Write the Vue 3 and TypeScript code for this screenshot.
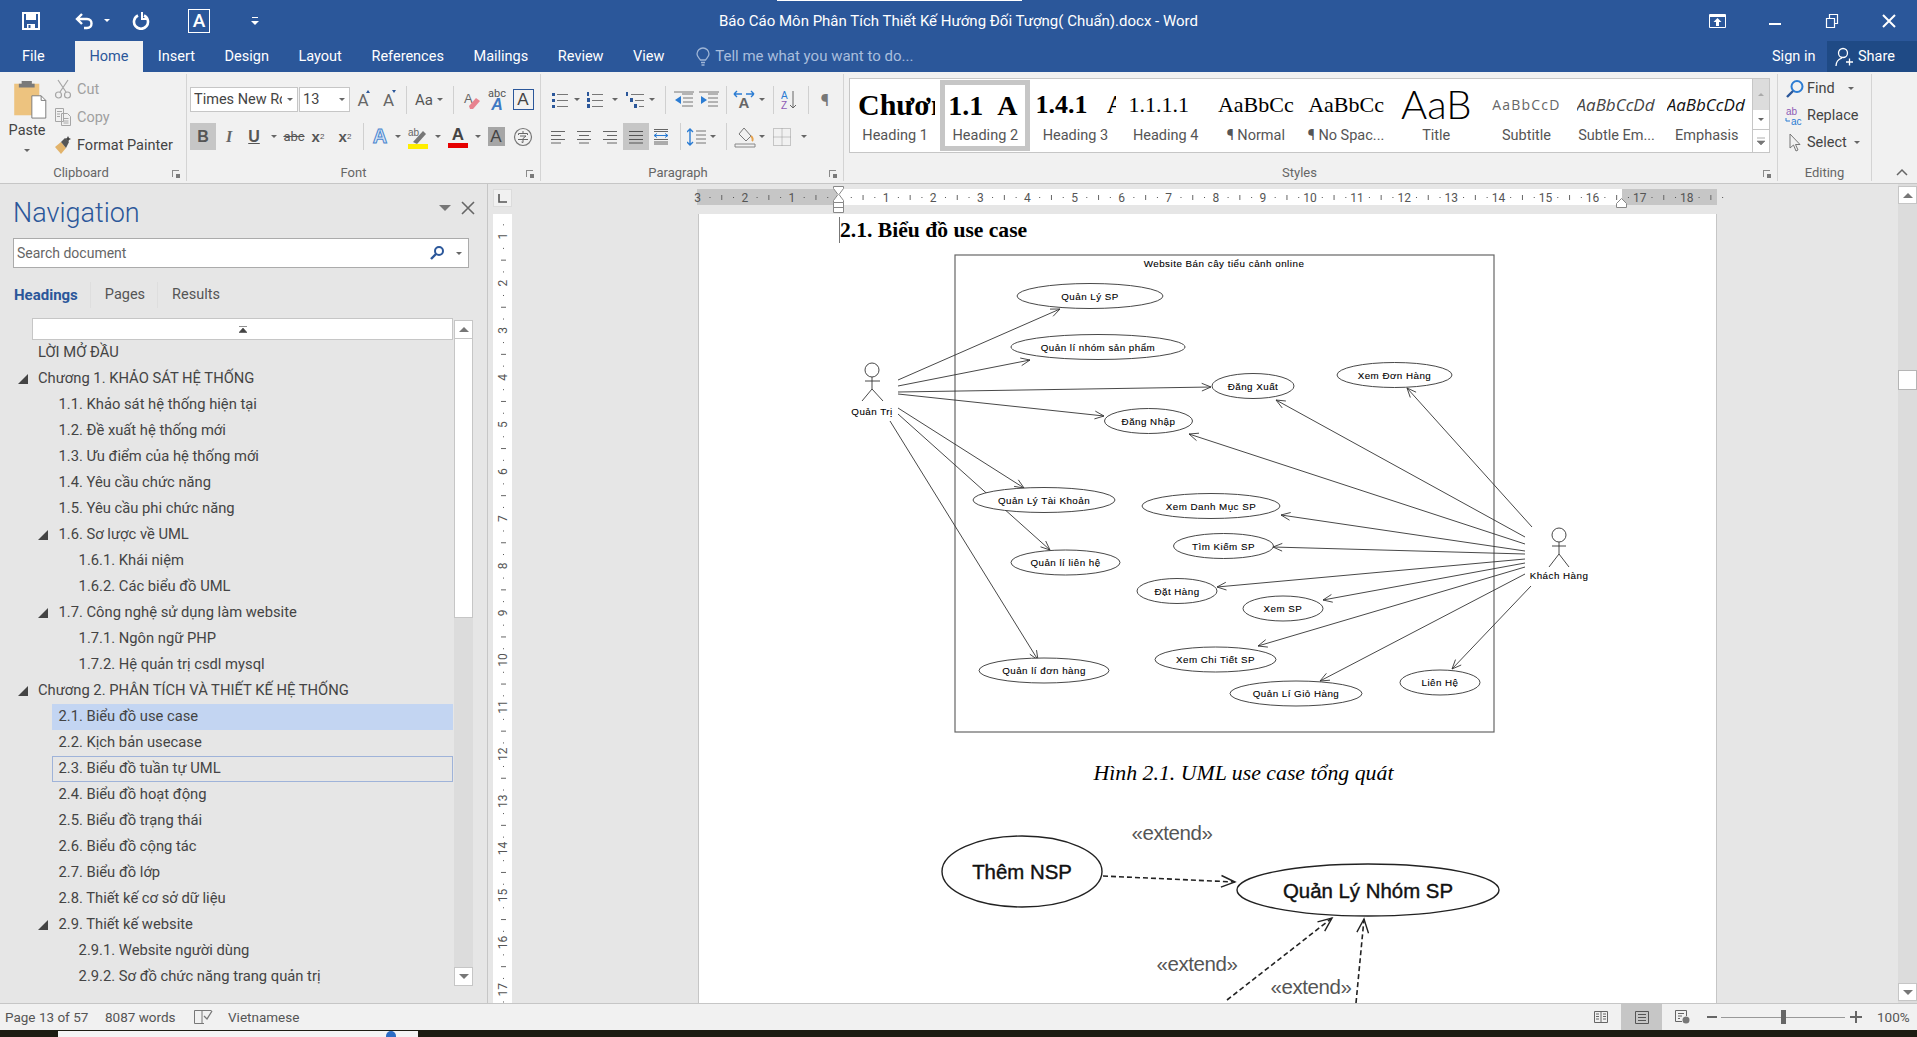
<script setup lang="ts">
interface NavRow { t: string; l: number; arrow?: boolean; sel?: boolean; hover?: boolean }

const tabs = ['Insert', 'Design', 'Layout', 'References', 'Mailings', 'Review', 'View']

const navRows: NavRow[] = [
  { t: 'LỜI MỞ ĐẦU', l: 1 },
  { t: 'Chương 1. KHẢO SÁT HỆ THỐNG', l: 1, arrow: true },
  { t: '1.1. Khảo sát hệ thống hiện tại', l: 2 },
  { t: '1.2. Đề xuất hệ thống mới', l: 2 },
  { t: '1.3. Ưu điểm của hệ thống mới', l: 2 },
  { t: '1.4. Yêu cầu chức năng', l: 2 },
  { t: '1.5. Yêu cầu phi chức năng', l: 2 },
  { t: '1.6. Sơ lược về UML', l: 2, arrow: true },
  { t: '1.6.1. Khái niệm', l: 3 },
  { t: '1.6.2. Các biểu đồ UML', l: 3 },
  { t: '1.7. Công nghệ sử dụng làm website', l: 2, arrow: true },
  { t: '1.7.1. Ngôn ngữ PHP', l: 3 },
  { t: '1.7.2. Hệ quản trị csdl mysql', l: 3 },
  { t: 'Chương 2. PHÂN TÍCH VÀ THIẾT KẾ HỆ THỐNG', l: 1, arrow: true },
  { t: '2.1. Biểu đồ use case', l: 2, sel: true },
  { t: '2.2. Kịch bản usecase', l: 2 },
  { t: '2.3. Biểu đồ tuần tự UML', l: 2, hover: true },
  { t: '2.4. Biểu đồ hoạt động', l: 2 },
  { t: '2.5. Biểu đồ trạng thái', l: 2 },
  { t: '2.6. Biểu đồ cộng tác', l: 2 },
  { t: '2.7. Biểu đồ lớp', l: 2 },
  { t: '2.8. Thiết kế cơ sở dữ liệu', l: 2 },
  { t: '2.9. Thiết kế website', l: 2, arrow: true },
  { t: '2.9.1. Website người dùng', l: 3 },
  { t: '2.9.2. Sơ đồ chức năng trang quản trị', l: 3 },
]

const styles = [
  { name: 'Heading 1', prev: 'Chương', cls: 'p-h1' },
  { name: 'Heading 2', prev: '1.1\u00a0\u00a0A', cls: 'p-h2', sel: true },
  { name: 'Heading 3', prev: '1.4.1\u00a0\u00a0\u00a0A', cls: 'p-h3' },
  { name: 'Heading 4', prev: '1.1.1.1', cls: 'p-h4' },
  { name: '¶ Normal', prev: 'AaBbCc', cls: 'p-n' },
  { name: '¶ No Spac...', prev: 'AaBbCc', cls: 'p-n' },
  { name: 'Title', prev: 'AaB', cls: 'p-title' },
  { name: 'Subtitle', prev: 'AaBbCcD', cls: 'p-sub' },
  { name: 'Subtle Em...', prev: 'AaBbCcDd', cls: 'p-se' },
  { name: 'Emphasis', prev: 'AaBbCcDd', cls: 'p-em' },
]

const CM = 47.1

// horizontal ruler: x = 0 is the left end of the grey part, number 0 sits at 142
const hTicks: { x: number; kind: string; n?: number }[] = []
for (let i = -12; i <= 75; i++) {
  const x = 142 + (i * CM) / 4
  if (i === 0) continue
  if (i % 4 === 0) hTicks.push({ x, kind: 'n', n: Math.abs(i / 4) })
  else if (i % 2 === 0) hTicks.push({ x, kind: 'long' })
  else hTicks.push({ x, kind: 'dot' })
}

const vTicks: { y: number; kind: string; n?: number }[] = []
for (let i = 1; i <= 70; i++) {
  const y = -25 + (i * CM) / 4
  if (i % 4 === 0) vTicks.push({ y, kind: 'n', n: i / 4 })
  else if (i % 2 === 0) vTicks.push({ y, kind: 'long' })
  else vTicks.push({ y, kind: 'dot' })
}

const useCases = [
  { t: 'Quản Lý SP', x: 1090, y: 296, rx: 73 },
  { t: 'Quản lí nhóm sản phẩm', x: 1098, y: 347, rx: 87 },
  { t: 'Đăng Nhập', x: 1148.5, y: 421, rx: 44 },
  { t: 'Quản Lý Tài Khoản', x: 1044, y: 500, rx: 71 },
  { t: 'Đăng Xuất', x: 1253, y: 386, rx: 41 },
  { t: 'Xem Đơn Hàng', x: 1394.5, y: 375, rx: 57.5 },
  { t: 'Xem Danh Mục SP', x: 1211, y: 506, rx: 69 },
  { t: 'Tìm Kiếm SP', x: 1223.5, y: 546, rx: 50 },
  { t: 'Đặt Hàng', x: 1177, y: 591, rx: 40 },
  { t: 'Xem SP', x: 1283, y: 608.5, rx: 40 },
  { t: 'Xem Chi Tiết SP', x: 1215.5, y: 659.5, rx: 60.5 },
  { t: 'Quản Lí Giỏ Hàng', x: 1296, y: 693.5, rx: 66 },
  { t: 'Liên Hệ', x: 1440, y: 682.5, rx: 40 },
  { t: 'Quản lí liên hệ', x: 1065.5, y: 562.5, rx: 54.5 },
  { t: 'Quản lí đơn hàng', x: 1044, y: 670.5, rx: 65 },
]

const links: number[][] = [
  [898, 380, 1060, 309], [898, 386, 1030, 360], [898, 392, 1211, 387], [898, 394, 1104, 416],
  [898, 408, 1024, 488], [898, 414, 1050, 550], [890, 421, 1038, 660],
  [1532, 527, 1407, 388], [1525, 537, 1276, 400], [1525, 544, 1189, 434], [1525, 551, 1281, 515],
  [1525, 554, 1273, 547], [1525, 559, 1217, 587], [1525, 563, 1323, 600], [1525, 567, 1258, 646],
  [1525, 574, 1320, 681], [1531, 586, 1452, 669],
]

const extendLinks: number[][] = [
  [1103, 876, 1235, 882], [1227, 1000, 1332, 918], [1356, 1003, 1364, 919],
]

// open arrow head at the end of a line
const arrowHead = (l: number[], size = 10): string => {
  const a = Math.atan2(l[3] - l[1], l[2] - l[0])
  const p = (d: number) => `${(l[2] - size * Math.cos(a + d)).toFixed(1)} ${(l[3] - size * Math.sin(a + d)).toFixed(1)}`
  return `M${p(0.4)} L${l[2]} ${l[3]} L${p(-0.4)}`
}
const arrowLine = (l: number[]): string => `M${l[0]} ${l[1]} L${l[2]} ${l[3]}`
</script>

<template>
  <div class="word">
    <header class="titlebar">
      <div class="loading-line"></div>
      <div class="qat">
        <svg class="q-save" width="18" height="18" viewBox="0 0 18 18"><path d="M1 1h16v16H1z" fill="none" stroke="#fff" stroke-width="2"/><path d="M4 1h10v7H4z" fill="#fff"/><path d="M5 12h8v5H5z" fill="#fff"/><path d="M6.5 13h2v3h-2z" fill="#2b579a"/></svg>
        <svg class="q-undo" width="19" height="18" viewBox="0 0 19 18"><path d="M7 2L2 7l5 5M2 7h10c6 0 6 9 0 9H9" fill="none" stroke="#fff" stroke-width="2.4"/></svg>
        <span class="caret white q-c1"></span>
        <svg class="q-redo" width="18" height="18" viewBox="0 0 18 18"><path d="M6 3.5a7 7 0 1 0 6 0" fill="none" stroke="#fff" stroke-width="2.6"/><path d="M11 1v7h6" fill="none" stroke="#fff" stroke-width="2" transform="translate(-1 -1)"/></svg>
        <span class="q-a">A</span>
        <svg class="q-more" width="8" height="10" viewBox="0 0 8 10"><path d="M1 1h6v1H1zM0 5h8L4 9z" fill="#fff"/></svg>
      </div>
      <div class="doc-title">Báo Cáo Môn Phân Tích Thiết Kế Hướng Đối Tượng( Chuẩn).docx - Word</div>
      <div class="winbtns">
        <svg width="58" height="18" viewBox="0 0 58 18"><path d="M21.5 2.5h16v13h-16z" fill="none" stroke="#fff"/><path d="M21 3h17v2H21zM29.5 6l4 4H31v4h-3v-4h-2.5z" fill="#fff"/></svg>
        <svg width="57" height="18" viewBox="0 0 57 18"><path d="M23 11h12v2H23z" fill="#fff"/></svg>
        <svg width="57" height="18" viewBox="0 0 57 18"><path d="M23.5 7.5h8v9h-8zM26.5 7V3.5h8v9h-3" fill="none" stroke="#fff" stroke-width="1.2" transform="translate(0 -1)"/></svg>
        <svg width="57" height="18" viewBox="0 0 57 18"><path d="M23 3l12 12M35 3L23 15" stroke="#fff" stroke-width="2"/></svg>
      </div>
    </header>

    <nav class="tabbar">
      <div class="tab file">File</div>
      <div class="tab active">Home</div>
      <div v-for="t in tabs" :key="t" class="tab">{{ t }}</div>
      <svg class="bulb" width="14" height="20" viewBox="0 0 14 20"><path d="M4.5 13C3 11 1 9.5 1 7a6 6 0 0 1 12 0c0 2.5-2 4-3.5 6zM5 15.5h4M5.5 18h3" fill="none" stroke="#9fb5d6" stroke-width="1.3"/></svg>
      <div class="tellme">Tell me what you want to do...</div>
      <div class="signin">Sign in</div>
      <div class="share">
        <svg width="18" height="20" viewBox="0 0 18 20"><circle cx="8" cy="6" r="4.5" fill="none" stroke="#fff" stroke-width="1.3"/><path d="M1 19c0-4 3-7 6-8M11 15h7M14.5 11.5v7" fill="none" stroke="#fff" stroke-width="1.3"/></svg>
        <span>Share</span>
      </div>
    </nav>

    <section class="ribbon">
      <div class="group g-clip">
        <div class="g-body clip-body">
          <div class="paste">
            <svg width="36" height="39" viewBox="0 0 36 42"><path d="M1 4h27v34H1z" fill="#edc37f"/><path d="M9 1h11v3h3v4H6V4h3z" fill="#7a7a7a"/><path d="M20 17h10l5 5v19H20z" fill="#fff" stroke="#777"/><path d="M30 17v5h5" fill="none" stroke="#777"/></svg>
            <span class="paste-label">Paste</span>
            <span class="caret"></span>
          </div>
          <div class="clip-cmds">
            <div class="cmd dim"><svg width="18" height="20" viewBox="0 0 18 20"><path d="M4 1l8 12M14 1L6 13" stroke="#a6a6a6" stroke-width="1.2"/><circle cx="4.5" cy="16" r="3" fill="none" stroke="#a6a6a6" stroke-width="1.2"/><circle cx="13.5" cy="16" r="3" fill="none" stroke="#a6a6a6" stroke-width="1.2"/></svg><span>Cut</span></div>
            <div class="cmd dim"><svg width="18" height="20" viewBox="0 0 18 20"><path d="M1.5 1.5h8v13h-8zM7.5 6.5h6l3 3v9h-9zM3 4.5h5M3 7h3M3 9.5h3M9.5 11.5h5M9.5 14h5M9.5 16h5" fill="#f1f1f1" stroke="#a6a6a6"/></svg><span>Copy</span></div>
            <div class="cmd"><svg width="18" height="20" viewBox="0 0 18 20"><path d="M1 12l6-5 5 6-5 6z" fill="#e2b36b"/><path d="M7 7l4-4 4 4-3 6z" fill="#555"/><path d="M14 1l1 2 2 1-2 1-1 2-1-2-2-1 2-1z" fill="#444"/></svg><span>Format Painter</span></div>
          </div>
        </div>
        <div class="g-label">Clipboard<i class="launcher"></i></div>
      </div>

      <div class="group g-font">
        <div class="g-body">
          <div class="row r1">
            <div class="combo c-name"><span>Times New Roman</span><b class="caret"></b></div>
            <div class="combo c-size"><span>13</span><b class="caret"></b></div>
            <div class="b w26 glyph">A<i class="grow"></i></div>
            <div class="b w25 glyph">A<i class="shrink"></i></div>
            <div class="b w10"><i class="vsep"></i></div>
            <div class="b w36 aa">Aa<b class="caret s"></b></div>
            <div class="b w12"><i class="vsep"></i></div>
            <div class="b w26"><svg width="18" height="22" viewBox="0 0 18 22"><text x="1" y="14" class="mini-a">A</text><path d="M6 17l7-8 4 3-7 8H7z" fill="#e8838f"/></svg></div>
            <div class="b w24 abc"><span>abc</span><em>A</em></div>
            <div class="b w28"><span class="boxa">A</span></div>
          </div>
          <div class="row r2">
            <div class="b w26 on bold">B</div>
            <div class="b w26 ital">I</div>
            <div class="b w24 under">U</div>
            <div class="b w16"><b class="caret s"></b></div>
            <div class="b w24 strike">abc</div>
            <div class="b w24 xs">x<sub>2</sub></div>
            <div class="b w30 xs">x<sup>2</sup></div>
            <div class="b w6"><i class="vsep"></i></div>
            <div class="b w28 effect">A</div>
            <div class="b w8"><b class="caret s"></b></div>
            <div class="b w32"><svg width="22" height="24" viewBox="0 0 22 24"><text x="1" y="11" class="mini-ab">ab</text><path d="M6 17L16 6l3 3-9 10z" fill="#777"/><path d="M1 19h20v5H1z" fill="#ffee00"/></svg></div>
            <div class="b w8"><b class="caret s"></b></div>
            <div class="b w32 colora"><span>A</span><i></i></div>
            <div class="b w8"><b class="caret s"></b></div>
            <div class="b w28"><span class="graya">A</span></div>
            <div class="b w26"><svg width="20" height="20" viewBox="0 0 20 20"><circle cx="10" cy="10" r="8.5" fill="none" stroke="#777" stroke-width="1.2"/><path d="M10 4v2M5.5 8V6.5h9V8M7 9h6l-3 2.5v4l-1.5-.5M5 12.5h10" fill="none" stroke="#666"/></svg></div>
          </div>
        </div>
        <div class="g-label">Font<i class="launcher"></i></div>
      </div>

      <div class="group g-para">
        <div class="g-body">
          <div class="row r1">
            <div class="b w22"><svg width="18" height="18" viewBox="0 0 18 18"><path d="M1 2h3v3H1zM1 8h3v3H1zM1 14h3v3H1z" fill="#2b579a"/><path d="M6 3.5h11M6 9.5h11M6 15.5h11" stroke="#777"/></svg></div>
            <div class="b w12"><b class="caret s"></b></div>
            <div class="b w24"><svg width="18" height="18" viewBox="0 0 18 18"><path d="M1 1h2v4H1zM1 7h3v4H1zM1 13h3v4H1z" fill="#2b579a"/><path d="M6 3.5h11M6 9.5h11M6 15.5h11" stroke="#777"/></svg></div>
            <div class="b w16"><b class="caret s"></b></div>
            <div class="b w24"><svg width="20" height="18" viewBox="0 0 20 18"><path d="M1 1h2v4H1zM5 7h3v4H5zM9 13h3v4H9z" fill="#2b579a"/><path d="M6 3.5h13M10 9.5h9M14 15.5h5" stroke="#777"/></svg></div>
            <div class="b w10"><b class="caret s"></b></div>
            <div class="b w16"><i class="vsep"></i></div>
            <div class="b w22"><svg width="20" height="18" viewBox="0 0 20 18"><path d="M1 9l6-4v8z" fill="#2b7cd3"/><path d="M8 3h11M9 7h10M9 11h10M8 15h11M0 1h20" stroke="#777"/></svg></div>
            <div class="b w28"><svg width="20" height="18" viewBox="0 0 20 18"><path d="M8 9L2 5v8z" fill="#2b7cd3"/><path d="M9 3h10M9 7h10M9 11h10M9 15h10M0 1h20" stroke="#777"/></svg></div>
            <div class="b w6"><i class="vsep"></i></div>
            <div class="b w30"><svg width="22" height="20" viewBox="0 0 22 20"><text x="11" y="18" text-anchor="middle" class="mini-big">A</text><path d="M1 4h8M13 4h8M1 4l3-3M1 4l3 3M21 4l-3-3M21 4l-3 3" fill="none" stroke="#2b7cd3" stroke-width="1.4"/></svg></div>
            <div class="b w6"><b class="caret s"></b></div>
            <div class="b w16"><i class="vsep"></i></div>
            <div class="b w16"><svg width="16" height="20" viewBox="0 0 16 20"><text x="0" y="9" class="mini-sort a">A</text><text x="0" y="19" class="mini-sort z">Z</text><path d="M12 1v17M9 15l3 3 3-3" fill="none" stroke="#666"/></svg></div>
            <div class="b w22"><i class="vsep"></i></div>
            <div class="b w12 pil">¶</div>
          </div>
          <div class="row r2">
            <div class="b w18"><svg width="16" height="14" viewBox="0 0 16 14"><path d="M1 1.5h14M1 5.5h10M1 9.5h14M1 13h10" stroke="#666"/></svg></div>
            <div class="b w34"><svg width="16" height="14" viewBox="0 0 16 14"><path d="M1 1.5h14M3 5.5h10M1 9.5h14M3 13h10" stroke="#666"/></svg></div>
            <div class="b w18"><svg width="16" height="14" viewBox="0 0 16 14"><path d="M1 1.5h14M5 5.5h10M1 9.5h14M5 13h10" stroke="#666"/></svg></div>
            <div class="b w4"></div>
            <div class="b w26 on"><svg width="16" height="14" viewBox="0 0 16 14"><path d="M1 1.5h14M1 5.5h14M1 9.5h14M1 13h14" stroke="#555"/></svg></div>
            <div class="b w24"><svg width="16" height="18" viewBox="0 0 16 18"><path d="M1 1.5h14M1 3.5h14M1 14h14M1 16h14M1 11.5h14" stroke="#666"/><path d="M1 7.5h14M1 7.5l3-2M1 7.5l3 2M15 7.5l-3-2M15 7.5l-3 2" fill="none" stroke="#2b7cd3"/></svg></div>
            <div class="b w14"><i class="vsep"></i></div>
            <div class="b w20"><svg width="20" height="18" viewBox="0 0 20 18"><path d="M3 1v16M0 4l3-3 3 3M0 14l3 3 3-3" fill="none" stroke="#2b7cd3" stroke-width="1.4"/><path d="M9 3h10M9 7h10M9 11h10M9 15h10" stroke="#777"/></svg></div>
            <div class="b w12"><b class="caret s"></b></div>
            <div class="b w14"><i class="vsep"></i></div>
            <div class="b w24"><svg width="22" height="22" viewBox="0 0 22 22"><path d="M10 2l7 8-5 5-7-7z" fill="none" stroke="#777"/><path d="M17 10c2 2 2 4 1 5" fill="none" stroke="#e5a14c" stroke-width="2"/><path d="M1 18h20v3H1z" fill="#f1f1f1" stroke="#888"/></svg></div>
            <div class="b w10"><b class="caret s"></b></div>
            <div class="b w30"><svg width="18" height="18" viewBox="0 0 18 18"><path d="M.5.5h17v17H.5zM9 .5v17M.5 9h17" fill="none" stroke="#999" stroke-dasharray="1 1"/></svg></div>
            <div class="b w14"><b class="caret s"></b></div>
          </div>
        </div>
        <div class="g-label">Paragraph<i class="launcher"></i></div>
      </div>

      <div class="group g-styles">
        <div class="g-body styles-body">
          <div class="gallery">
            <div class="items">
              <div v-for="s in styles" :key="s.name" class="st" :class="{ sel: s.sel }">
                <div class="prev" :class="s.cls">{{ s.prev }}</div>
                <div class="st-name">{{ s.name }}</div>
              </div>
            </div>
            <div class="gscroll">
              <div class="gb gb1"><b class="tri-up"></b></div>
              <div class="gb gb2"><b class="caret s"></b></div>
              <div class="gb gb3"><svg width="8" height="9" viewBox="0 0 8 9"><path d="M0 1h8M0 4h8L4 8z" fill="#777" stroke="#777" stroke-width=".6"/></svg></div>
            </div>
          </div>
        </div>
        <div class="g-label">Styles<i class="launcher"></i></div>
      </div>

      <div class="group g-edit">
        <div class="g-body edit-body">
          <div class="ed"><svg width="20" height="20" viewBox="0 0 20 20"><circle cx="12" cy="7.5" r="5.5" fill="none" stroke="#2b7cd3" stroke-width="2"/><path d="M8 12l-6 6" stroke="#2b579a" stroke-width="2.4"/></svg><span>Find</span><b class="caret s find"></b></div>
          <div class="ed"><svg width="20" height="20" viewBox="0 0 20 20"><text x="1" y="9" class="rep1">ab</text><text x="6" y="19" class="rep2">ac</text><path d="M1 12v3h4" fill="none" stroke="#2b7cd3"/></svg><span>Replace</span></div>
          <div class="ed"><svg width="20" height="20" viewBox="0 0 20 20"><path d="M5 1v14l3.5-3 2.5 6 2-1-2.5-5.5H15z" fill="none" stroke="#777"/></svg><span>Select</span><b class="caret s sel"></b></div>
        </div>
        <div class="g-label">Editing</div>
      </div>
      <svg class="collapse" width="12" height="8" viewBox="0 0 12 8"><path d="M1 7l5-5 5 5" fill="none" stroke="#666" stroke-width="1.5"/></svg>
    </section>

    <main class="workspace">
      <aside class="nav">
        <div class="nav-head">
          <h2>Navigation</h2>
          <svg width="14" height="8" viewBox="0 0 14 8"><path d="M1 1h12L7 7z" fill="#777"/></svg>
          <svg class="nav-x" width="14" height="14" viewBox="0 0 14 14"><path d="M1 1l12 12M13 1L1 13" stroke="#666" stroke-width="1.6"/></svg>
        </div>
        <div class="search">
          <span>Search document</span>
          <svg width="16" height="16" viewBox="0 0 16 16"><circle cx="10" cy="6" r="4" fill="none" stroke="#2b579a" stroke-width="2"/><path d="M7 9l-5 5" stroke="#2b579a" stroke-width="2.4"/></svg>
          <b class="caret s"></b>
        </div>
        <div class="nav-tabs">
          <span class="act">Headings</span>
          <i></i>
          <span>Pages</span>
          <i></i>
          <span>Results</span>
        </div>
        <div class="nav-body">
          <div class="tree">
            <div class="tree-top"><svg width="8" height="7" viewBox="0 0 8 7"><path d="M0 .5h8M4 2l4 4.5H0z" fill="#444" stroke="#444" stroke-width=".6"/></svg></div>
            <div v-for="r in navRows" :key="r.t" class="row-nav" :class="'lv' + r.l">
              <i class="twist" :class="{ on: r.arrow }"></i>
              <span class="lbl" :class="{ sel: r.sel, hover: r.hover }">{{ r.t }}</span>
            </div>
          </div>
          <div class="nav-scroll">
            <div class="nbtn"><b class="tri-up"></b></div>
            <div class="nthumb"></div>
            <div class="ntrack"></div>
            <div class="nbtn"><b class="tri-down"></b></div>
          </div>
        </div>
      </aside>

      <section class="doc-pane">
        <div class="vruler-col">
          <div class="corner"><svg width="9" height="9" viewBox="0 0 9 9"><path d="M1 0v8h8" fill="none" stroke="#555" stroke-width="1.6"/></svg></div>
          <svg class="vruler" width="19" height="790" viewBox="0 0 19 790">
            <g v-for="t in vTicks" :key="t.y">
              <text v-if="t.kind === 'n'" :transform="`translate(13.5 ${t.y}) rotate(-90)`" text-anchor="middle" class="rnum">{{ t.n }}</text>
              <rect v-else-if="t.kind === 'long'" x="8" :y="t.y" width="5" height="1" fill="#666" />
              <rect v-else x="10" :y="t.y" width="1" height="1" fill="#555" />
            </g>
          </svg>
        </div>
        <div class="page-col">
          <svg class="hruler" width="1021" height="28" viewBox="0 0 1021 28">
            <rect x="0" y="3" width="1020" height="16" fill="#fff" />
            <rect x="0" y="3" width="140" height="16" fill="#c6c6c6" />
            <rect x="925" y="3" width="95" height="16" fill="#c6c6c6" />
            <g v-for="t in hTicks" :key="t.x">
              <text v-if="t.kind === 'n'" :x="t.x" y="15.5" text-anchor="middle" class="rnum">{{ t.n }}</text>
              <rect v-else-if="t.kind === 'long'" :x="t.x" y="9" width="1" height="5" fill="#666" />
              <rect v-else :x="t.x" y="11" width="1" height="1" fill="#555" />
            </g>
            <path d="M136.5 .5h10v2l-4.5 6 4.5 6v2h-10v-2l4.5-6-4.5-6z" fill="#fff" stroke="#888" />
            <path d="M136.5 16.5h10v10h-10zM136.5 21.5h10" fill="#fff" stroke="#888" />
            <path d="M919.5 21.5v-4l5-5 5 5v4z" fill="#fff" stroke="#888" />
          </svg>
          <article class="page">
            <h3 class="heading"><span>2.1. Biểu đồ use case</span></h3>
            <svg class="dia" width="1019" height="501" viewBox="699 244 1019 501">
              <rect x="955" y="255" width="539" height="477" fill="none" stroke="#666" stroke-width="1.2" />
              <text x="1224" y="267" class="uc title-uc">Website Bán cây tiểu cảnh online</text>
              <g v-for="l in links" :key="l.join()">
                <path :d="arrowLine(l)" class="ln" />
                <path :d="arrowHead(l)" class="ln" />
              </g>
              <g v-for="u in useCases" :key="u.t">
                <ellipse :cx="u.x" :cy="u.y" :rx="u.rx" ry="12.5" class="el" />
                <text :x="u.x" :y="u.y + 3.5" class="uc">{{ u.t }}</text>
              </g>
              <g class="actor">
                <circle cx="872" cy="370" r="7" />
                <path d="M872 377v12M865 381h15M872 389l-10 12M872 389l11 12" />
                <circle cx="1559" cy="535" r="7" />
                <path d="M1559 542v12M1552 546h14M1559 554l-10 13M1559 554l10 13" />
              </g>
              <text x="872" y="415" class="uc">Quản Trị</text>
              <text x="1559" y="579" class="uc">Khách Hàng</text>
            </svg>
            <p class="caption">Hình 2.1. UML use case tổng quát</p>
            <svg class="dia" width="1019" height="200" viewBox="699 810 1019 200">
              <ellipse cx="1022" cy="871.5" rx="80" ry="35.5" class="el2" />
              <ellipse cx="1368" cy="890" rx="131" ry="26" class="el2" />
              <text x="1022" y="879" class="big">Thêm NSP</text>
              <text x="1368" y="898" class="big">Quản Lý Nhóm SP</text>
              <text x="1172" y="840" class="ext">«extend»</text>
              <text x="1197" y="971" class="ext">«extend»</text>
              <text x="1311" y="994" class="ext">«extend»</text>
              <g v-for="l in extendLinks" :key="l.join()">
                <path :d="arrowLine(l)" class="dash" />
                <path :d="arrowHead(l, 15)" class="dash-head" />
              </g>
            </svg>
          </article>
        </div>
        <div class="doc-scroll">
          <div class="dbtn up"><b class="tri-up"></b></div>
          <div class="dthumb"></div>
          <div class="dbtn down"><b class="tri-down"></b></div>
        </div>
      </section>
    </main>

    <footer class="status">
      <span class="s1">Page 13 of 57</span>
      <span class="s2">8087 words</span>
      <svg class="s3" width="20" height="16" viewBox="0 0 20 16"><path d="M9 14.5H1.5v-13H9zM9 1.5h9.5M9 14.5h2" fill="none" stroke="#777"/><path d="M11 7l3 3 5-8" fill="none" stroke="#777" stroke-width="1.3"/></svg>
      <span class="s4">Vietnamese</span>
      <div class="st-right">
        <div class="view"><svg width="14" height="14" viewBox="0 0 14 14"><path d="M.5 1.5h13v11H.5zM7 1v12M2 4h3M2 6.5h3M2 9h3M9 4h3M9 6.5h3M9 9h3" fill="none" stroke="#666"/></svg></div>
        <div class="view active"><svg width="14" height="13" viewBox="0 0 14 13"><path d="M.5.5h13v12H.5zM3 3.5h8M3 6.5h8M3 9.5h8" fill="none" stroke="#555"/></svg></div>
        <div class="view"><svg width="15" height="14" viewBox="0 0 15 14"><path d="M7 11.5H.5V.5h11V6M3 3.5h6M3 6h4M3 8.5h2" fill="none" stroke="#666"/><circle cx="11" cy="10" r="3.5" fill="#777"/></svg></div>
        <span class="zm minus"></span>
        <div class="slider"><i></i></div>
        <span class="zm plus"></span>
        <span class="pct">100%</span>
      </div>
    </footer>

    <div class="taskbar"><div class="tb-white"><i></i></div></div>
  </div>
</template>

<style scoped>
.word {
  position: relative;
  width: 1917px;
  height: 1037px;
  display: flex;
  flex-direction: column;
  overflow: hidden;
  font-family: Roboto, "Open Sans", sans-serif;
  color: #444;
  background: #f1f1f1;
}

/* title bar */
.titlebar {
  position: relative;
  flex: 0 0 41px;
  background: #2b579a;
  display: grid;
  grid-template-columns: 1fr auto 1fr;
  align-items: center;
}
.loading-line {
  position: absolute;
  left: 777px;
  top: 0;
  width: 245px;
  height: 1px;
  background: #fff;
}
.qat {
  display: flex;
  align-items: center;
  padding-left: 22px;
}
.q-undo { margin-left: 35px; }
.q-c1 { margin-left: 10px; }
.q-redo { margin-left: 22px; }
.q-a {
  margin-left: 38px;
  width: 20px;
  height: 22px;
  border: 1px solid #fff;
  color: #fff;
  font: 500 19px/22px Roboto, sans-serif;
  text-align: center;
  box-sizing: content-box;
}
.q-more { margin-left: 41px; }
.doc-title {
  color: #fff;
  font-size: 15px;
}
.winbtns {
  display: flex;
  justify-content: flex-end;
  align-items: center;
}
.caret {
  display: inline-block;
  width: 0;
  height: 0;
  border-left: 3.5px solid transparent;
  border-right: 3.5px solid transparent;
  border-top: 3.5px solid #666;
}
.caret.white { border-top-color: #fff; }
.caret.s {
  border-left-width: 3px;
  border-right-width: 3px;
  border-top-width: 3px;
}

/* tabs */
.tabbar {
  flex: 0 0 30px;
  background: #2b579a;
  display: flex;
  align-items: stretch;
  color: #fff;
  font-size: 14.5px;
}
.tab {
  padding: 0 14.8px;
  line-height: 31px;
}
.tab.file { padding: 0 13px 0 22px; width: 75px; box-sizing: border-box; }
.tab.active {
  background: #f1f1f1;
  color: #2b579a;
  width: 68px;
  box-sizing: border-box;
  text-align: center;
  padding: 0;
}
.bulb { margin: 6px 0 0 17px; }
.tellme {
  margin-left: 5px;
  line-height: 31px;
  font-size: 15px;
  color: #a9bedd;
}
.signin {
  margin-left: auto;
  line-height: 31px;
  width: 55px;
}
.share {
  width: 90px;
  background: #1f4a85;
  display: flex;
  align-items: center;
  gap: 5px;
  padding-left: 8px;
  box-sizing: border-box;
}

/* ribbon */
.ribbon {
  position: relative;
  flex: 0 0 112px;
  box-sizing: border-box;
  padding-top: 2px;
  display: flex;
  background: #f1f1f1;
  border-bottom: 1px solid #c6c6c6;
}
.group {
  position: relative;
  height: 107px;
  display: flex;
  flex-direction: column;
  border-right: 1px solid #d4d4d4;
  box-sizing: border-box;
}
.g-clip { width: 187px; }
.g-font { width: 354px; padding-left: 3px; }
.g-para { width: 303px; padding-left: 8px; }
.g-styles { width: 934px; padding-left: 5px; }
.g-edit { width: 94px; }
.g-body {
  flex: 1;
  padding-top: 13px;
}
.g-label {
  position: relative;
  height: 16px;
  text-align: center;
  font-size: 13px;
  line-height: 16px;
  color: #666;
}
.g-clip .g-label { padding-right: 24px; }
.g-font .g-label { padding-right: 23px; }
.g-para .g-label { padding-right: 36px; }
.g-styles .g-label { padding-right: 27px; }
.launcher {
  position: absolute;
  right: 7px;
  top: 5px;
  width: 7px;
  height: 7px;
  border-left: 1px solid #8a8a8a;
  border-top: 1px solid #8a8a8a;
  box-sizing: border-box;
}
.launcher::after {
  content: '';
  position: absolute;
  right: -1px;
  bottom: -1px;
  width: 4px;
  height: 4px;
  background: #7a7a7a;
}
.row { display: flex; align-items: center; }
.row.r1 { height: 25px; margin-bottom: 11px; }
.row.r2 { height: 27px; }
.b {
  display: flex;
  align-items: center;
  justify-content: center;
  height: 100%;
  flex: none;
  color: #555;
}
.b.on { background: #c6c6c6; }
.w4 { width: 4px; }
.w6 { width: 6px; } .w8 { width: 8px; } .w10 { width: 10px; } .w12 { width: 12px; }
.w14 { width: 14px; } .w16 { width: 16px; } .w18 { width: 18px; } .w20 { width: 20px; }
.w22 { width: 22px; } .w24 { width: 24px; } .w25 { width: 25px; } .w26 { width: 26px; }
.w28 { width: 28px; } .w30 { width: 30px; } .w32 { width: 32px; } .w34 { width: 34px; } .w36 { width: 36px; }
.vsep { display: block; width: 1px; height: 28px; background: #d0d0d0; }
.r2 .vsep { height: 27px; }

/* clipboard */
.clip-body { display: flex; padding-top: 6px; }
.paste {
  width: 54px;
  display: flex;
  flex-direction: column;
  align-items: center;
}
.paste svg { margin-left: 6px; }
.paste-label { font-size: 14.5px; margin-top: 3px; color: #444; }
.paste .caret { margin-top: 10px; }
.clip-cmds { margin-top: -5px; }
.cmd {
  height: 28px;
  display: flex;
  align-items: center;
  gap: 5px;
  font-size: 14.5px;
  color: #444;
}
.cmd.dim { color: #a0a0a0; }

/* font group */
.combo {
  height: 25px;
  background: #fff;
  border: 1px solid #c6c6c6;
  box-sizing: border-box;
  display: flex;
  align-items: center;
  font-size: 14.5px;
  color: #444;
  padding-left: 3px;
  position: relative;
}
.combo span { overflow: hidden; white-space: nowrap; }
.combo .caret { position: absolute; right: 4px; top: 10px; }
.c-name { width: 108px; margin-right: 1px; }
.c-name span { width: 88px; }
.c-size { width: 51px; }
.glyph { font-size: 17px; position: relative; color: #666; }
.grow, .shrink {
  position: absolute;
  top: 3px;
  left: 16px;
  width: 0;
  height: 0;
  border-left: 2.5px solid transparent;
  border-right: 2.5px solid transparent;
}
.grow { border-bottom: 3px solid #2b579a; }
.shrink { border-top: 3px solid #2b579a; }
.aa { font-size: 15px; gap: 4px; }
.abc { flex-direction: column; line-height: 10px; }
.abc span { font-size: 11px; color: #555; }
.abc em { font: italic 700 16px/12px "Liberation Sans", sans-serif; color: #3e79c3; }
.boxa {
  width: 19px;
  height: 19px;
  border: 1px solid #2b579a;
  font: 400 17px/19px "Liberation Sans", sans-serif;
  text-align: center;
  color: #444;
}
.bold { font: 700 16px "Liberation Sans", sans-serif; }
.ital { font: italic 700 16px "Liberation Serif", serif; color: #666; }
.under { font: 700 16px "Liberation Sans", sans-serif; text-decoration: underline; }
.strike { font-size: 13px; text-decoration: line-through; }
.xs { font: 700 15px "Liberation Sans", sans-serif; }
.xs sub, .xs sup { font: 400 8px "Liberation Sans", sans-serif; }
.effect {
  font: 700 20px "Liberation Sans", sans-serif;
  color: #dbe8f7;
  -webkit-text-stroke: 1px #4a86cf;
}
.colora { flex-direction: column; font: 700 17px/17px "Liberation Sans", sans-serif; color: #444; }
.colora i { display: block; width: 20px; height: 5px; background: #e60000; }
.graya {
  width: 17px;
  height: 19px;
  background: #a6a6a6;
  text-align: center;
  font: 400 17px/19px "Liberation Sans", sans-serif;
  color: #444;
}
.mini-a { font: 400 13px "Liberation Sans", sans-serif; fill: #666; }
.mini-ab { font: 400 10px "Liberation Sans", sans-serif; fill: #666; }
.mini-big { font: 700 15px "Liberation Sans", sans-serif; fill: #666; }
.mini-sort { font: 400 10px "Liberation Sans", sans-serif; }
.mini-sort.a { fill: #2b7cd3; }
.mini-sort.z { fill: #8e5bb5; }
.pil { font-size: 17px; color: #777; }

/* styles gallery */
.styles-body { padding-top: 4px; }
.gallery {
  display: flex;
  width: 921px;
  height: 75px;
  box-sizing: border-box;
  background: #fff;
  border: 1px solid #c6c6c6;
}
.items { display: flex; width: 902px; }
.st {
  flex: 0 0 90.2px;
  box-sizing: border-box;
  height: 73px;
  padding: 6px 5px 0;
  overflow: hidden;
  text-align: center;
}
.st.sel { border: 5px solid #c6c6c6; padding: 1px 0 0; height: 71px; margin-top: 1px; }
.prev {
  height: 39px;
  line-height: 39px;
  white-space: nowrap;
  overflow: hidden;
  text-align: left;
  color: #000;
}
.st.sel .prev { padding-left: 3px; }
.st-name {
  margin-top: 2px;
  font-size: 14.5px;
  line-height: 20px;
  color: #555;
  white-space: nowrap;
}
.st.sel .st-name { margin-top: 1px; }
.p-h1 { font: 700 30px/39px "Liberation Serif", serif; padding: 0 3px 0 3px; }
.p-h2 { font: 700 28px/39px "Liberation Serif", serif; }
.p-h3 { font: 700 26px/39px "Liberation Serif", serif; }
.p-h4 { font: 400 22px/39px "Liberation Serif", serif; padding-left: 3px; }
.p-n { font: 400 22px/39px "Liberation Serif", serif; text-align: center; }
.p-title { font: 300 40px/39px Lato, sans-serif; text-align: center; }
.p-sub { font: 400 14px/39px "Open Sans", sans-serif; color: #666; letter-spacing: 1.2px; text-align: center; }
.p-se { font: italic 400 17px/39px "Open Sans", sans-serif; color: #444; padding-right: 4px; }
.p-em { font: italic 400 17px/39px "Open Sans", sans-serif; color: #111; padding-right: 4px; }
.gscroll { width: 18px; border-left: 1px solid #c6c6c6; }
.gb { display: flex; align-items: center; justify-content: center; }
.gb1 { height: 31px; background: #dcdcdc; }
.gb2 { height: 19px; border-bottom: 1px solid #c6c6c6; }
.gb3 { height: 22px; }
.tri-up, .tri-down {
  display: block;
  width: 0;
  height: 0;
  border-left: 5px solid transparent;
  border-right: 5px solid transparent;
}
.tri-up { border-bottom: 5px solid #777; }
.tri-down { border-top: 5px solid #777; }
.gb1 .tri-up { border-left-width: 3px; border-right-width: 3px; border-bottom: 3px solid #aaa; }

/* editing */
.edit-body { padding-top: 1px; padding-left: 7px; }
.ed {
  height: 27px;
  display: flex;
  align-items: center;
  gap: 2px;
  font-size: 14.5px;
  color: #444;
}
.ed .find { margin-left: 11px; }
.ed .sel { margin-left: 5px; }
.rep1 { font: 400 10px "Liberation Sans", sans-serif; fill: #8e5bb5; }
.rep2 { font: 400 10px "Liberation Sans", sans-serif; fill: #2b7cd3; }
.collapse { position: absolute; left: 1896px; top: 96px; }

/* workspace */
.workspace {
  flex: 1;
  min-height: 0;
  display: flex;
  background: #e6e6e6;
  overflow: hidden;
}
.nav {
  flex: 0 0 488px;
  box-sizing: border-box;
  border-right: 1px solid #c6c6c6;
  display: flex;
  flex-direction: column;
}
.nav-head {
  height: 54px;
  padding: 0 12px 0 13px;
  display: flex;
  align-items: center;
  box-sizing: border-box;
}
.nav-head h2 {
  flex: 1;
  margin: 0;
  font-weight: 300;
  font-size: 27px;
  color: #2b579a;
  padding-top: 4px;
}
.nav-head svg { margin-bottom: 6px; }
.nav-x { margin-left: 9px; }
.search {
  margin-left: 13px;
  width: 456px;
  height: 30px;
  box-sizing: border-box;
  background: #fff;
  border: 1px solid #ababab;
  display: flex;
  align-items: center;
  padding: 0 6px 0 3px;
  font-size: 14px;
  color: #666;
}
.search span { flex: 1; }
.search .caret { margin-left: 11px; }
.nav-tabs {
  height: 50px;
  padding: 3px 0 0 14px;
  display: flex;
  align-items: center;
  font-size: 14.5px;
  color: #555;
  box-sizing: border-box;
}
.nav-tabs .act { color: #2b579a; font-weight: 700; font-size: 15px; }
.nav-tabs i { width: 1px; height: 26px; background: #dedede; margin: 0 14px 0 12px; }
.nav-body { flex: 1; display: flex; min-height: 0; }
.tree { width: 453px; }
.tree-top {
  margin-left: 32px;
  height: 22px;
  box-sizing: border-box;
  background: #fff;
  border: 1px solid #c6c6c6;
  display: flex;
  align-items: center;
  justify-content: center;
}
.row-nav {
  display: flex;
  align-items: center;
  height: 26px;
  font-size: 14.75px;
  color: #444;
}
.row-nav.lv1 { padding-left: 18px; }
.row-nav.lv2 { padding-left: 38px; }
.row-nav.lv3 { padding-left: 58px; }
.twist {
  flex: 0 0 10px;
  height: 10px;
  margin-right: 10px;
}
.row-nav.lv2 .twist { margin-right: 10.5px; }
.row-nav.lv3 .twist { margin-right: 10.6px; }
.twist.on {
  background: #444;
  clip-path: polygon(100% 0, 100% 100%, 0 100%);
}
.lbl {
  flex: 1;
  line-height: 23px;
  padding-bottom: 1px;
  border: 1px solid transparent;
  margin-left: -7px;
  padding-left: 6px;
}
.lbl.sel { background: #c3d5f2; border-color: #c3d5f2; }
.lbl.hover { border-color: #9fb3d9; }
.nav-scroll {
  margin: 2px 0 0 1px;
  width: 19px;
  height: 666px;
  display: flex;
  flex-direction: column;
  background: #dcdcdc;
}
.nbtn {
  height: 19px;
  flex: none;
  box-sizing: border-box;
  background: #fff;
  border: 1px solid #c6c6c6;
  display: flex;
  align-items: center;
  justify-content: center;
}
.nthumb {
  height: 279px;
  box-sizing: border-box;
  background: #fff;
  border: 1px solid #c6c6c6;
  border-top: 0;
}
.ntrack { flex: 1; }

/* document */
.doc-pane { flex: 1; display: flex; min-width: 0; }
.vruler-col { width: 209px; padding: 5px 0 0 5px; box-sizing: border-box; }
.corner {
  width: 19px;
  height: 18px;
  background: #f1f1f1;
  border: 1px solid #dcdcdc;
  box-sizing: border-box;
  display: flex;
  align-items: center;
  justify-content: center;
  margin-bottom: 7px;
}
.vruler { display: block; background: #fff; }
.rnum { font: 400 12px Roboto, sans-serif; fill: #555; }
.page-col {
  width: 1021px;
  min-width: 0;
  display: flex;
  flex-direction: column;
}
.hruler {
  flex: none;
  display: block;
  margin-top: 2px;
  overflow: visible;
}
.page {
  flex: 1;
  min-height: 0;
  margin: 0 0 0 1px;
  width: 1019px;
  box-sizing: border-box;
  background: #fff;
  border-left: 1px solid #c6c6c6;
  border-right: 1px solid #c6c6c6;
  overflow: hidden;
}
.heading {
  margin: 0;
  height: 30px;
  padding: 3px 0 0 140px;
  box-sizing: border-box;
  font: 700 21.6px/26px "Liberation Serif", serif;
  color: #000;
}
.heading span { display: inline-block; border-left: 1px solid #777; }
.dia { display: block; }
.caption {
  margin: 0;
  height: 65px;
  padding-top: 10px;
  box-sizing: border-box;
  text-align: center;
  font: italic 400 21.8px/36px "Liberation Serif", serif;
  color: #000;
  transform: translateX(36px);
}
.uc {
  font: 400 9.8px "Liberation Sans", sans-serif;
  text-anchor: middle;
  fill: #000;
  stroke: #000;
  stroke-width: .1;
  letter-spacing: .47px;
}
.title-uc { letter-spacing: .5px; }
.ln, .el, .actor {
  fill: none;
  stroke: #333;
  stroke-width: .9;
}
.el { fill: #fff; }
.actor circle, .actor path { fill: none; }
.el2 { fill: #fff; stroke: #222; stroke-width: 1.4; }
.big { font: 400 20.4px "Liberation Sans", sans-serif; text-anchor: middle; fill: #111; stroke: #111; stroke-width: .4; }
.ext { font: 400 20.5px "Liberation Sans", sans-serif; text-anchor: middle; fill: #555; letter-spacing: -.4px; }
.dash { fill: none; stroke: #222; stroke-width: 1.6; stroke-dasharray: 5 3; }
.dash-head { fill: none; stroke: #222; stroke-width: 1.4; }
.doc-scroll {
  flex: 0 0 19px;
  margin-left: auto;
  background: #dcdcdc;
  position: relative;
  display: flex;
  flex-direction: column;
}
.dbtn {
  flex: none;
  height: 18px;
  margin-top: 2px;
  box-sizing: border-box;
  background: #fff;
  border: 1px solid #c6c6c6;
  display: flex;
  align-items: center;
  justify-content: center;
}
.dbtn.down { margin-top: auto; margin-bottom: 2px; }
.dthumb {
  margin-top: 166px;
  height: 20px;
  box-sizing: border-box;
  background: #fff;
  border: 1px solid #b5b5b5;
}

/* status bar */
.status {
  flex: 0 0 27px;
  box-sizing: border-box;
  border-top: 1px solid #c6c6c6;
  background: #f1f1f1;
  display: flex;
  align-items: center;
  font-size: 13.5px;
  color: #555;
}
.s1 { margin-left: 5px; width: 100px; }
.s2 { width: 88px; }
.s3 { margin-right: 15px; }
.st-right {
  margin-left: auto;
  display: flex;
  align-items: center;
  height: 100%;
}
.view {
  width: 41px;
  height: 100%;
  display: flex;
  align-items: center;
  justify-content: center;
}
.view.active { background: #c6c6c6; }
.zm { width: 18px; height: 100%; position: relative; display: block; }
.zm.plus { width: 22px; }
.zm::before {
  content: '';
  position: absolute;
  left: 4px;
  top: 12px;
  width: 10px;
  height: 2px;
  background: #666;
}
.zm.plus::before { left: 5px; width: 12px; }
.zm.plus::after {
  content: '';
  position: absolute;
  left: 10px;
  top: 7px;
  width: 2px;
  height: 12px;
  background: #666;
}
.slider {
  position: relative;
  width: 124px;
  height: 1px;
  background: #999;
}
.slider i {
  position: absolute;
  left: 60px;
  top: -7px;
  width: 5px;
  height: 14px;
  background: #666;
}
.pct { margin-left: 10px; width: 40px; }

/* desktop strip under the window */
.taskbar {
  flex: 0 0 7px;
  background: #1c1c12;
  padding-left: 58px;
}
.tb-white {
  position: relative;
  width: 360px;
  height: 6px;
  margin-top: 1px;
  background: #f4f4f4;
}
.tb-white i {
  position: absolute;
  left: 328px;
  top: 0;
  width: 10px;
  height: 6px;
  background: #2b6cc4;
  border-radius: 5px 5px 0 0;
}
</style>
